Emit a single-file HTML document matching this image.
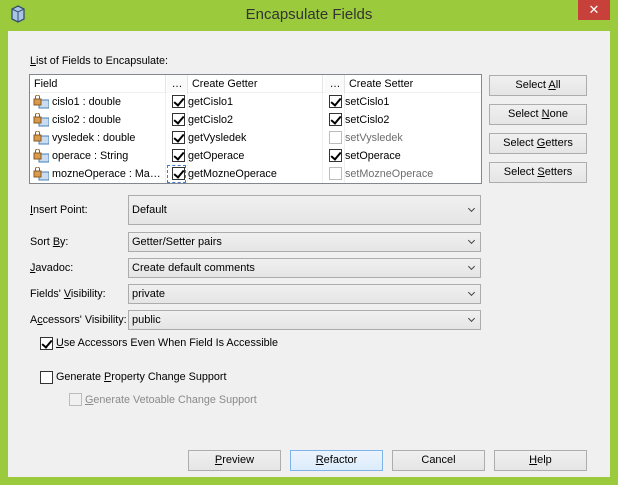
<!DOCTYPE html>
<html><head><style>
*{margin:0;padding:0;box-sizing:border-box}
body{width:618px;height:485px;background:#9bcb3c;font-family:"Liberation Sans",sans-serif;font-size:11px;color:#000;position:relative;overflow:hidden}
.a{position:absolute}
.content{left:8px;top:31px;width:602px;height:446px;background:#f0f0f0}
.title{left:0;top:6px;width:618px;text-align:center;font-size:15px;color:#333}
.close{left:578px;top:0;width:32px;height:20px;background:#c7403a;color:#fff;text-align:center;font-size:13px;line-height:20px}
.btn{position:absolute;height:21px;border:1px solid #adadad;background:linear-gradient(#f0f0f0,#e5e5e5);text-align:center;line-height:19px;font-size:11px}
.combo{position:absolute;left:128px;width:353px;border:1px solid #acacac;background:linear-gradient(#f0f0f0,#e5e5e5);padding-left:3px;font-size:11px}
.combo:after{content:"";position:absolute;right:6px;top:50%;width:4px;height:4px;border-right:1.5px solid #444;border-bottom:1.5px solid #444;transform:translateY(-4px) rotate(45deg)}
.lbl{position:absolute;left:30px;font-size:10.8px}
.table{left:29px;top:74px;width:453px;height:110px;border:1px solid #828790;background:#fff}
.row{position:absolute;left:0;width:451px;height:18px;border-bottom:1px solid #f0f0f0}
.cell{position:absolute;top:0;height:18px;line-height:18px;font-size:10.8px;white-space:nowrap}
.cb{position:absolute;width:13px;height:13px;border:1px solid #333;background:#fff}
.cb.on:after{content:"";position:absolute;left:3px;top:0px;width:4px;height:8px;border-right:2px solid #000;border-bottom:2px solid #000;transform:rotate(40deg)}
.cb.dis{border-color:#bcbcbc}
.gray{color:#6d6d6d}
.ic{position:absolute;left:3px;top:2px;width:16px;height:14px}
u{text-decoration:underline}
</style></head><body>
<div class="a content"></div>
<div class="a title">Encapsulate Fields</div>
<svg class="a" style="left:10px;top:5px" width="16" height="18"><path d="M8 1 L14 4 L14 14 L8 17 L2 14 L2 4 Z" fill="#a9c4e6" stroke="#34506e" stroke-width="1.3"/><path d="M2 4 L8 7 L14 4 M8 7 L8 17" fill="none" stroke="#34506e"/></svg>
<div class="a close">✕</div>

<div class="lbl" style="top:55px"><u>L</u>ist of Fields to Encapsulate:</div>
<div class="a table">
 <div class="row" style="top:0;background:#fff">
  <div class="cell" style="left:4px">Field</div>
  <div class="cell" style="left:137px;width:20px;background:#fafafa;text-align:center">…</div>
  <div class="cell" style="left:162px">Create Getter</div>
  <div class="cell" style="left:295px;width:20px;background:#fafafa;text-align:center">…</div>
  <div class="cell" style="left:319px">Create Setter</div>
 </div>
 <div class="a" style="left:135px;top:0;width:1px;height:18px;background:#e5e5e5"></div>
 <div class="a" style="left:157px;top:0;width:1px;height:18px;background:#e5e5e5"></div>
 <div class="a" style="left:292px;top:0;width:1px;height:18px;background:#e5e5e5"></div>
 <div class="a" style="left:314px;top:0;width:1px;height:18px;background:#e5e5e5"></div>
 <div class="a" style="left:135px;top:18px;width:1px;height:90px;background:#f0f0f0"></div>
 <div class="a" style="left:157px;top:18px;width:1px;height:90px;background:#f0f0f0"></div>
 <div class="a" style="left:292px;top:18px;width:1px;height:90px;background:#f0f0f0"></div>
 <div class="a" style="left:314px;top:18px;width:1px;height:90px;background:#f0f0f0"></div>
</div>

<div class="a" style="left:30px;top:93px">
 <svg class="ic"><rect x="6" y="5" width="10" height="8" fill="#c9dcf0" stroke="#4a7fb5"/><rect x="1" y="4" width="7" height="6" fill="#d99a4e" stroke="#8a5a20"/><path d="M2.5 4 V2 a2 2 0 0 1 4 0 V4" fill="none" stroke="#8a5a20"/></svg>
 <div class="cell" style="left:22px">cislo1 : double</div>
 <div class="cb on" style="left:142px;top:2px"></div><div class="cell" style="left:158px">getCislo1</div>
 <div class="cb on" style="left:299px;top:2px"></div><div class="cell" style="left:315px">setCislo1</div>
</div>
<div class="a" style="left:30px;top:111px">
 <svg class="ic"><rect x="6" y="5" width="10" height="8" fill="#c9dcf0" stroke="#4a7fb5"/><rect x="1" y="4" width="7" height="6" fill="#d99a4e" stroke="#8a5a20"/><path d="M2.5 4 V2 a2 2 0 0 1 4 0 V4" fill="none" stroke="#8a5a20"/></svg>
 <div class="cell" style="left:22px">cislo2 : double</div>
 <div class="cb on" style="left:142px;top:2px"></div><div class="cell" style="left:158px">getCislo2</div>
 <div class="cb on" style="left:299px;top:2px"></div><div class="cell" style="left:315px">setCislo2</div>
</div>
<div class="a" style="left:30px;top:129px">
 <svg class="ic"><rect x="6" y="5" width="10" height="8" fill="#c9dcf0" stroke="#4a7fb5"/><rect x="1" y="4" width="7" height="6" fill="#d99a4e" stroke="#8a5a20"/><path d="M2.5 4 V2 a2 2 0 0 1 4 0 V4" fill="none" stroke="#8a5a20"/></svg>
 <div class="cell" style="left:22px">vysledek : double</div>
 <div class="cb on" style="left:142px;top:2px"></div><div class="cell" style="left:158px">getVysledek</div>
 <div class="cb dis" style="left:299px;top:2px"></div><div class="cell gray" style="left:315px">setVysledek</div>
</div>
<div class="a" style="left:30px;top:147px">
 <svg class="ic"><rect x="6" y="5" width="10" height="8" fill="#c9dcf0" stroke="#4a7fb5"/><rect x="1" y="4" width="7" height="6" fill="#d99a4e" stroke="#8a5a20"/><path d="M2.5 4 V2 a2 2 0 0 1 4 0 V4" fill="none" stroke="#8a5a20"/></svg>
 <div class="cell" style="left:22px">operace : String</div>
 <div class="cb on" style="left:142px;top:2px"></div><div class="cell" style="left:158px">getOperace</div>
 <div class="cb on" style="left:299px;top:2px"></div><div class="cell" style="left:315px">setOperace</div>
</div>
<div class="a" style="left:30px;top:165px">
 <svg class="ic"><rect x="6" y="5" width="10" height="8" fill="#c9dcf0" stroke="#4a7fb5"/><rect x="1" y="4" width="7" height="6" fill="#d99a4e" stroke="#8a5a20"/><path d="M2.5 4 V2 a2 2 0 0 1 4 0 V4" fill="none" stroke="#8a5a20"/></svg>
 <div class="cell" style="left:22px">mozneOperace : Ma…</div>
 <div class="a" style="left:137px;top:0;width:19px;height:18px;border:1px dashed #3c7fd0"></div>
 <div class="cb on" style="left:142px;top:2px"></div><div class="cell" style="left:158px">getMozneOperace</div>
 <div class="cb dis" style="left:299px;top:2px"></div><div class="cell gray" style="left:315px">setMozneOperace</div>
</div>

<div class="btn" style="left:489px;top:75px;width:98px">Select <u>A</u>ll</div>
<div class="btn" style="left:489px;top:104px;width:98px">Select <u>N</u>one</div>
<div class="btn" style="left:489px;top:133px;width:98px">Select <u>G</u>etters</div>
<div class="btn" style="left:489px;top:162px;width:98px">Select <u>S</u>etters</div>

<div class="lbl" style="top:204px"><u>I</u>nsert Point:</div>
<div class="combo" style="top:195px;height:30px;line-height:28px">Default</div>
<div class="lbl" style="top:236px">Sort <u>B</u>y:</div>
<div class="combo" style="top:232px;height:20px;line-height:18px">Getter/Setter pairs</div>
<div class="lbl" style="top:262px"><u>J</u>avadoc:</div>
<div class="combo" style="top:258px;height:20px;line-height:18px">Create default comments</div>
<div class="lbl" style="top:288px">Fields' <u>V</u>isibility:</div>
<div class="combo" style="top:284px;height:20px;line-height:18px">private</div>
<div class="lbl" style="top:314px">A<u>c</u>cessors' Visibility:</div>
<div class="combo" style="top:310px;height:20px;line-height:18px">public</div>

<div class="cb on" style="left:40px;top:337px"></div>
<div class="lbl" style="left:56px;top:337px"><u>U</u>se Accessors Even When Field Is Accessible</div>
<div class="cb" style="left:40px;top:371px"></div>
<div class="lbl" style="left:56px;top:371px">Generate <u>P</u>roperty Change Support</div>
<div class="cb dis" style="left:69px;top:393px;background:#f0f0f0"></div>
<div class="lbl gray" style="left:85px;top:394px;color:#8a8a8a"><u>G</u>enerate Vetoable Change Support</div>

<div class="btn" style="left:188px;top:450px;width:93px"><u>P</u>review</div>
<div class="btn" style="left:290px;top:450px;width:93px;border-color:#7eb4ea;background:linear-gradient(#ecf4fc,#dcecfc)"><u>R</u>efactor</div>
<div class="btn" style="left:392px;top:450px;width:93px">Cancel</div>
<div class="btn" style="left:494px;top:450px;width:93px"><u>H</u>elp</div>
</body></html>
